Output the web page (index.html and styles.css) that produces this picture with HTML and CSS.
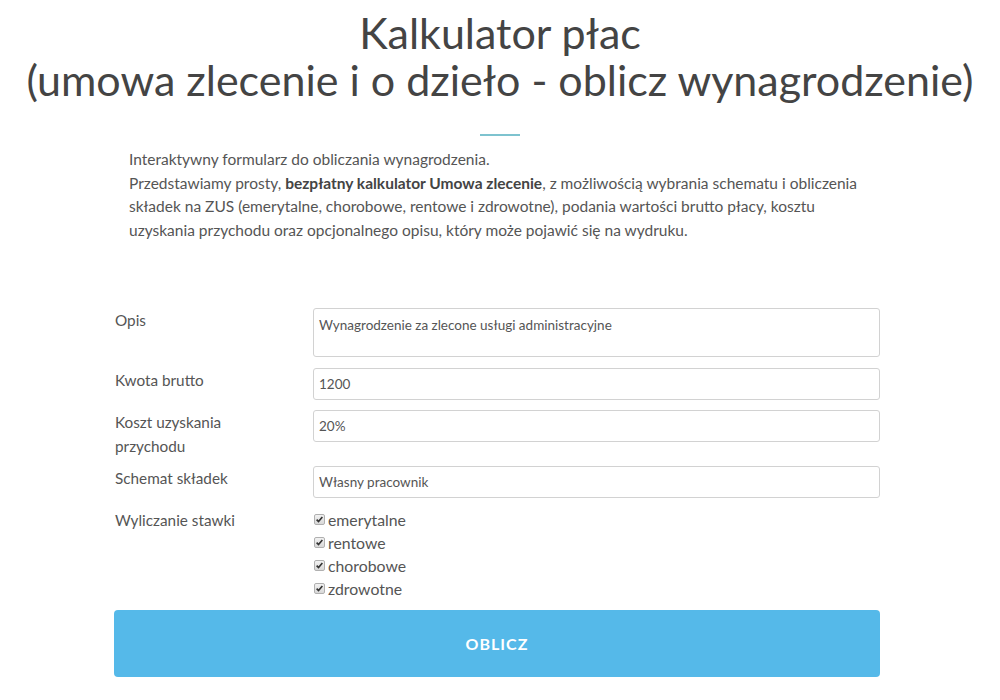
FILE: index.html
```html
<!DOCTYPE html>
<html lang="pl">
<head>
<meta charset="utf-8">
<title>Kalkulator płac</title>
<link rel="stylesheet" href="styles.css">
</head>
<body>
<header class="head">
  <h1 class="title">Kalkulator płac<br>(umowa zlecenie i o dzieło - oblicz wynagrodzenie)</h1>
  <div class="bar"></div>
</header>
<section class="intro">
  <p>Interaktywny formularz do obliczania wynagrodzenia.<br>Przedstawiamy prosty, <strong>bezpłatny kalkulator Umowa zlecenie</strong>, z możliwością wybrania schematu i obliczenia składek na ZUS (emerytalne, chorobowe, rentowe i zdrowotne), podania wartości brutto płacy, kosztu uzyskania przychodu oraz opcjonalnego opisu, który może pojawić się na wydruku.</p>
</section>
<form class="form">
  <div class="row row-area">
    <div class="label">Opis</div>
    <div class="field"><div class="input area">Wynagrodzenie za zlecone usługi administracyjne</div></div>
  </div>
  <div class="row">
    <div class="label">Kwota brutto</div>
    <div class="field"><div class="input">1200</div></div>
  </div>
  <div class="row row-tall">
    <div class="label">Koszt uzyskania<br>przychodu</div>
    <div class="field"><div class="input">20%</div></div>
  </div>
  <div class="row">
    <div class="label">Schemat składek</div>
    <div class="field"><div class="input">Własny pracownik</div></div>
  </div>
  <div class="row">
    <div class="label">Wyliczanie stawki</div>
    <div class="field checks">
      <label class="check"><span class="box"><svg viewBox="0 0 11 11"><path d="M2 5.6 L4.3 8 L9 2.4" fill="none" stroke="#333" stroke-width="2"/></svg></span>emerytalne</label>
      <label class="check"><span class="box"><svg viewBox="0 0 11 11"><path d="M2 5.6 L4.3 8 L9 2.4" fill="none" stroke="#333" stroke-width="2"/></svg></span>rentowe</label>
      <label class="check"><span class="box"><svg viewBox="0 0 11 11"><path d="M2 5.6 L4.3 8 L9 2.4" fill="none" stroke="#333" stroke-width="2"/></svg></span>chorobowe</label>
      <label class="check"><span class="box"><svg viewBox="0 0 11 11"><path d="M2 5.6 L4.3 8 L9 2.4" fill="none" stroke="#333" stroke-width="2"/></svg></span>zdrowotne</label>
    </div>
  </div>
  <div class="btn">OBLICZ</div>
</form>
</body>
</html>
```

FILE: styles.css
```css
* { box-sizing: border-box; }
html, body { margin: 0; padding: 0; background: #fff; }
body { font-family: Lato, "Open Sans", sans-serif; color: #555; }

.head { text-align: center; padding-top: 9px; }
.title {
  margin: 0;
  font-weight: 400;
  font-size: 43px;
  line-height: 47px;
  color: #444;
}
.bar {
  width: 40px;
  height: 2px;
  background: #7ec3cf;
  margin: 31px auto 0;
}

.intro { padding: 0 120px 0 129px; margin-top: 12px; }
.intro p {
  margin: 0;
  font-size: 15.5px;
  line-height: 23.7px;
  color: #555;
}
.intro strong { font-weight: 700; color: #444; }

.form { width: 766px; margin: 65px 0 0 114px; }
.row { display: flex; margin-bottom: 10px; }
.row-area { margin-bottom: 11px; }
.row-tall { margin-bottom: 8px; }
.label {
  width: 199px;
  font-size: 15.3px;
  line-height: 24px;
  color: #555;
  padding-left: 1px;
}
.field { flex: 1; }
.input {
  height: 32px;
  border: 1px solid #d2d2d2;
  border-radius: 3px;
  padding: 0 5px;
  font-size: 13.5px;
  line-height: 30px;
  color: #555;
  background: #fff;
}
.input.area { height: 49px; line-height: 18px; padding-top: 7px; }

.checks { display: flex; flex-direction: column; }
.check {
  display: flex;
  align-items: center;
  font-size: 15.8px;
  line-height: 23px;
  color: #555;
}
.box {
  width: 11px;
  height: 11px;
  margin: 0 3px 0 1px;
  border: 1px solid #b0b0b0;
  border-radius: 2px;
  background: linear-gradient(#f2f2f2, #d8d8d8);
  display: flex;
  align-items: center;
  justify-content: center;
}
.box svg { display: block; width: 9px; height: 9px; }

.btn {
  margin-top: 1px;
  height: 67px;
  background: #55b9e9;
  border-radius: 4px;
  color: #fff;
  font-weight: 700;
  font-size: 16px;
  letter-spacing: 1px;
  display: flex;
  align-items: center;
  justify-content: center;
}
```
